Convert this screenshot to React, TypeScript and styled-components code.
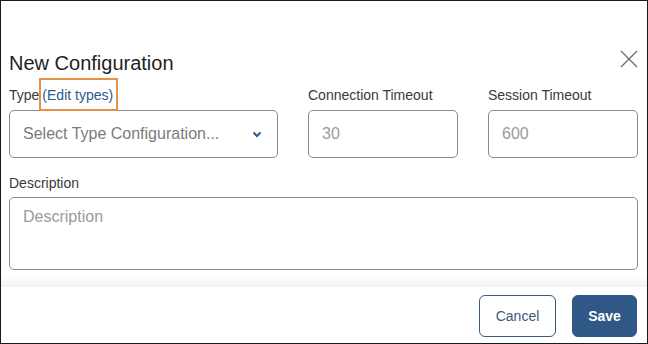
import React from "react";
import styled, { createGlobalStyle } from "styled-components";

const GlobalStyle = createGlobalStyle`
  html, body {
    margin: 0;
    padding: 0;
    background: #ffffff;
  }
  * {
    box-sizing: border-box;
  }
`;

const Frame = styled.div`
  width: 648px;
  height: 344px;
  border: 1px solid #1a1a1a;
  display: flex;
  flex-direction: column;
  font-family: "Liberation Sans", Arial, sans-serif;
  background: #ffffff;
  overflow: hidden;
`;

const Body = styled.div`
  flex: 1;
  padding: 50px 9px 0 8px;
  display: flex;
  flex-direction: column;
`;

const Header = styled.div`
  display: flex;
  justify-content: space-between;
  align-items: flex-start;
`;

const Title = styled.h2`
  margin: 0;
  font-size: 20px;
  line-height: 24px;
  font-weight: normal;
  color: #1f1f1f;
`;

const CloseButton = styled.button`
  width: 18px;
  height: 18px;
  margin-top: -1px;
  padding: 0;
  border: none;
  background: none;
  display: flex;
  align-items: center;
  justify-content: center;
  cursor: pointer;
`;

const FieldRow = styled.div`
  display: grid;
  grid-template-columns: 269px 150px 150px;
  column-gap: 30px;
  margin-top: 12px;
`;

const Field = styled.div<{ $gap: number; $top?: number }>`
  display: flex;
  flex-direction: column;
  gap: ${(p) => p.$gap}px;
  margin-top: ${(p) => p.$top ?? 0}px;
`;

const Label = styled.label`
  font-size: 14px;
  line-height: 16px;
  color: #3a3a3a;
`;

const EditLink = styled.a`
  position: relative;
  margin-left: 3px;
  color: #2c5a8e;
  text-decoration: none;
  cursor: pointer;

  &::after {
    content: "";
    position: absolute;
    left: -3px;
    right: -5px;
    top: -9px;
    bottom: -8px;
    border: 2px solid #e69149;
    pointer-events: none;
  }
`;

const SelectBox = styled.button`
  height: 48px;
  width: 100%;
  padding: 0 15px 0 13px;
  border: 1px solid #8a8a8a;
  border-radius: 5px;
  background: #ffffff;
  display: flex;
  align-items: center;
  justify-content: space-between;
  font-family: inherit;
  font-size: 16px;
  color: #7b7b7b;
  cursor: pointer;
`;

const TextInput = styled.input`
  height: 48px;
  width: 100%;
  padding: 0 13px;
  border: 1px solid #8a8a8a;
  border-radius: 5px;
  font-family: inherit;
  font-size: 16px;
  color: #333;
  outline: none;

  &::placeholder {
    color: #9a9a9a;
  }
`;

const TextArea = styled.textarea`
  height: 73px;
  width: 100%;
  padding: 9px 13px;
  border: 1px solid #8a8a8a;
  border-radius: 5px;
  font-family: inherit;
  font-size: 16px;
  line-height: 20px;
  resize: none;
  outline: none;

  &::placeholder {
    color: #9a9a9a;
  }
`;

const Footer = styled.div`
  position: relative;
  height: 56px;
  padding: 8px 10px 0 0;
  display: flex;
  justify-content: flex-end;
  align-items: flex-start;
  gap: 16px;

  &::before {
    content: "";
    position: absolute;
    left: 0;
    right: 0;
    top: -11px;
    height: 11px;
    background: linear-gradient(to bottom, rgba(0, 0, 0, 0), rgba(0, 0, 0, 0.05));
  }
`;

const Button = styled.button<{ $primary?: boolean }>`
  height: 42px;
  width: ${(p) => (p.$primary ? 65 : 77)}px;
  padding: 0;
  border-radius: 6px;
  border: 1px solid ${(p) => (p.$primary ? "#2f5886" : "#3c5a7c")};
  background: ${(p) => (p.$primary ? "#2f5886" : "#ffffff")};
  color: ${(p) => (p.$primary ? "#ffffff" : "#3d5a7a")};
  font-family: inherit;
  font-size: 14px;
  font-weight: ${(p) => (p.$primary ? "bold" : "normal")};
  cursor: pointer;
`;

const Chevron = () => (
  <svg width="10" height="7" viewBox="0 0 10 7">
    <path d="M1.5 1.5 L5 5 L8.5 1.5" fill="none" stroke="#2c5a8e" strokeWidth="2" />
  </svg>
);

const CloseIcon = () => (
  <svg width="18" height="18" viewBox="0 0 18 18">
    <path d="M1 1 L17 17 M17 1 L1 17" stroke="#6b6b6b" strokeWidth="1.3" />
  </svg>
);

export default function App() {
  return (
    <>
      <GlobalStyle />
      <Frame>
        <Body>
          <Header>
            <Title>New Configuration</Title>
            <CloseButton aria-label="Close">
              <CloseIcon />
            </CloseButton>
          </Header>

          <FieldRow>
            <Field $gap={7}>
              <Label>
                Type
                <EditLink>(Edit types)</EditLink>
              </Label>
              <SelectBox>
                <span>Select Type Configuration...</span>
                <Chevron />
              </SelectBox>
            </Field>
            <Field $gap={7}>
              <Label>Connection Timeout</Label>
              <TextInput placeholder="30" />
            </Field>
            <Field $gap={7}>
              <Label>Session Timeout</Label>
              <TextInput placeholder="600" />
            </Field>
          </FieldRow>

          <Field $gap={6} $top={17}>
            <Label>Description</Label>
            <TextArea placeholder="Description" />
          </Field>
        </Body>

        <Footer>
          <Button>Cancel</Button>
          <Button $primary>Save</Button>
        </Footer>
      </Frame>
    </>
  );
}
